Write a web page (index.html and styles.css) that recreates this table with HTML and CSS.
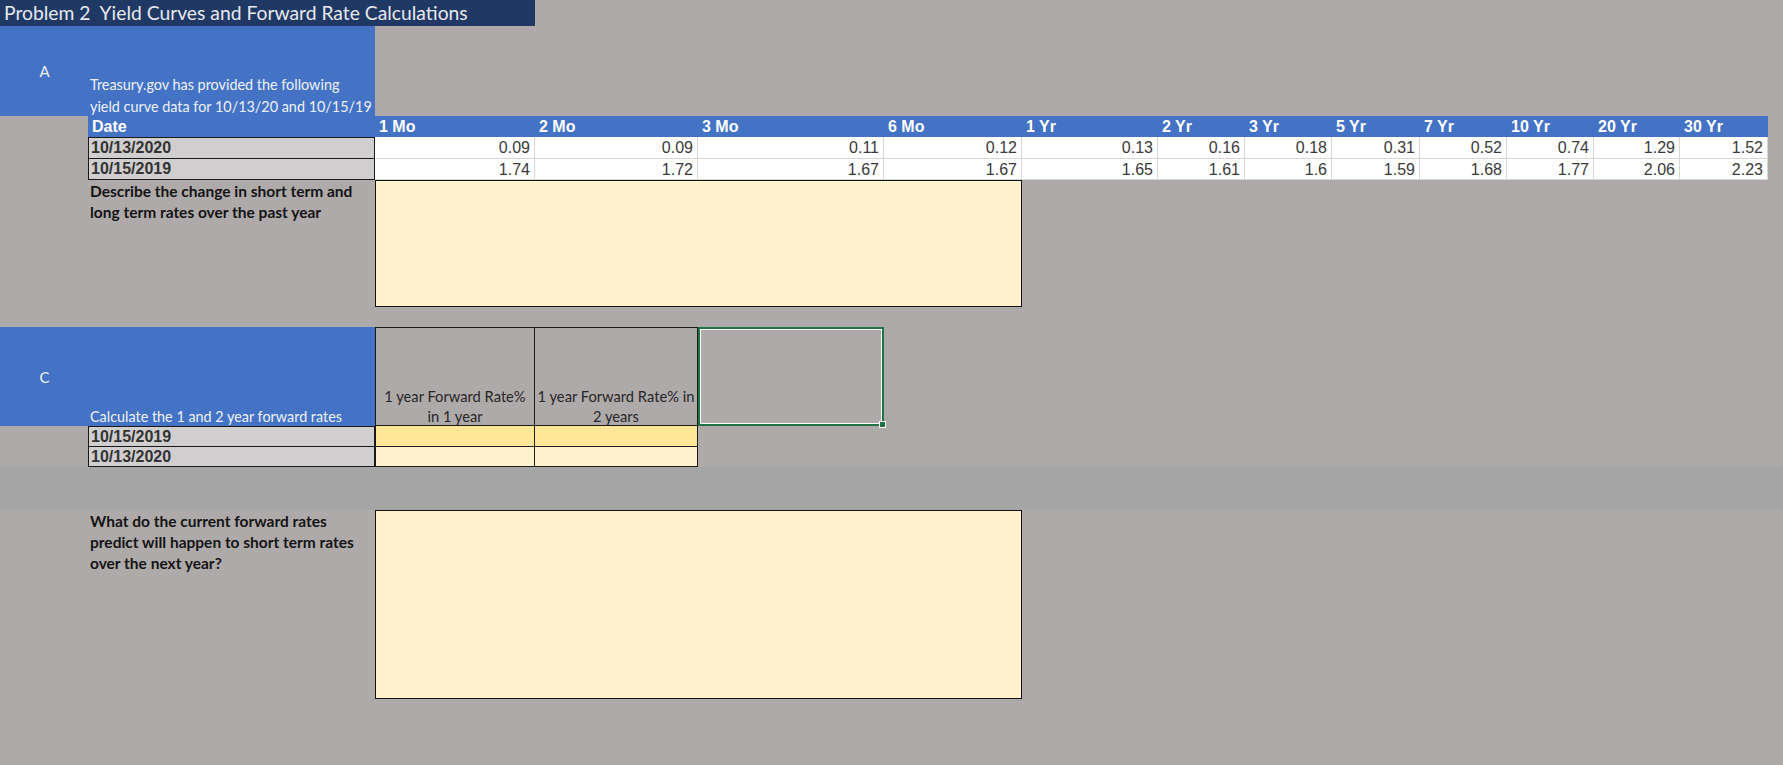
FILE: index.html
```html
<!DOCTYPE html>
<html>
<head>
<meta charset="utf-8">
<title>Problem 2 Yield Curves and Forward Rate Calculations</title>
<link rel="stylesheet" href="styles.css">
</head>
<body>
<div class="sheet">
  <!-- row 1: title -->
  <div class="title">Problem 2&nbsp; Yield Curves and Forward Rate Calculations</div>
  <div class="fill-r1"></div>

  <!-- row 2: section A -->
  <div class="blue sec-letter">A</div>
  <div class="blue sec-text"><span class="txt">Treasury.gov has provided the following<br>yield curve data for 10/13/20 and 10/15/19</span></div>
  <div class="fill-r2"></div>

  <!-- row 3: header -->
  <div class="empty"></div>
  <div class="hdr">Date</div>
  <div class="hdr">1 Mo</div>
  <div class="hdr">2 Mo</div>
  <div class="hdr">3 Mo</div>
  <div class="hdr">6 Mo</div>
  <div class="hdr">1 Yr</div>
  <div class="hdr">2 Yr</div>
  <div class="hdr">3 Yr</div>
  <div class="hdr">5 Yr</div>
  <div class="hdr">7 Yr</div>
  <div class="hdr">10 Yr</div>
  <div class="hdr">20 Yr</div>
  <div class="hdr">30 Yr</div>
  <div class="empty"></div>

  <!-- row 4 -->
  <div class="empty"></div>
  <div class="date first">10/13/2020</div>
  <div class="val">0.09</div>
  <div class="val">0.09</div>
  <div class="val">0.11</div>
  <div class="val">0.12</div>
  <div class="val">0.13</div>
  <div class="val">0.16</div>
  <div class="val">0.18</div>
  <div class="val">0.31</div>
  <div class="val">0.52</div>
  <div class="val">0.74</div>
  <div class="val">1.29</div>
  <div class="val">1.52</div>
  <div class="empty"></div>

  <!-- row 5 -->
  <div class="empty"></div>
  <div class="date">10/15/2019</div>
  <div class="val">1.74</div>
  <div class="val">1.72</div>
  <div class="val">1.67</div>
  <div class="val">1.67</div>
  <div class="val">1.65</div>
  <div class="val">1.61</div>
  <div class="val">1.6</div>
  <div class="val">1.59</div>
  <div class="val">1.68</div>
  <div class="val">1.77</div>
  <div class="val">2.06</div>
  <div class="val">2.23</div>
  <div class="empty"></div>

  <!-- row 6: describe -->
  <div class="empty"></div>
  <div class="label">Describe the change in short term and<br>long term rates over the past year</div>
  <div class="answer span4"></div>
  <div class="fill-rest"></div>

  <!-- row 7: gap -->
  <div class="gap"></div>

  <!-- row 8: section C -->
  <div class="blue sec-letter">C</div>
  <div class="blue sec-text"><span class="txt">Calculate the 1 and 2 year forward rates</span></div>
  <div class="fwd-hdr"><span class="txt">1 year Forward Rate%<br>in 1 year</span></div>
  <div class="fwd-hdr"><span class="txt">1 year Forward Rate% in<br>2 years</span></div>
  <div class="selected"></div>
  <div class="fill-rest2"></div>

  <!-- row 9 -->
  <div class="empty"></div>
  <div class="date first">10/15/2019</div>
  <div class="fwd strong"></div>
  <div class="fwd strong"></div>
  <div class="fill-rest3"></div>

  <!-- row 10 -->
  <div class="empty"></div>
  <div class="date">10/13/2020</div>
  <div class="fwd light"></div>
  <div class="fwd light"></div>
  <div class="fill-rest3"></div>

  <!-- row 11: darker band -->
  <div class="band"></div>

  <!-- row 12: question -->
  <div class="empty"></div>
  <div class="label">What do the current forward rates<br>predict will happen to short term rates<br>over the next year?</div>
  <div class="answer span4"></div>
  <div class="fill-rest"></div>
</div>
</body>
</html>
```

FILE: styles.css
```css
html, body {
  margin: 0;
  padding: 0;
  background: #aeaaaa;
}

body {
  width: 1783px;
  height: 765px;
  overflow: hidden;
  font-family: "Lato", "Open Sans", sans-serif;
}

.sheet {
  display: grid;
  grid-template-columns: 88px 287px 160px 163px 186px 138px 136px 87px 87px 88px 87px 87px 86px 88px 1fr;
  grid-template-rows: 26px 90px 21px 22px 21px 127px 20px 99px 21px 20px 43px 189px;
}

.sheet > div {
  box-sizing: border-box;
  min-width: 0;
}

/* title row */
.title {
  grid-column: 1 / 4;
  background: #203864;
  color: #e6e9ef;
  font-size: 19.3px;
  line-height: 26px;
  padding-left: 4px;
  white-space: nowrap;
  overflow: hidden;
}
.fill-r1 { grid-column: 4 / 16; }
.fill-r2 { grid-column: 3 / 16; }
.fill-rest { grid-column: 7 / 16; }
.fill-rest2 { grid-column: 6 / 16; }
.fill-rest3 { grid-column: 5 / 16; }

.blue {
  background: #4472c4;
  color: #eef2fa;
}

.sec-letter {
  display: flex;
  align-items: center;
  justify-content: center;
  font-size: 15px;
  padding-left: 1px;
}

.sec-text {
  display: flex;
  align-items: flex-end;
  font-size: 14.4px;
  line-height: 21.5px;
  padding-left: 2px;
  white-space: nowrap;
}

.txt {
  display: block;
  margin-bottom: -1px;
}

/* header row */
.hdr {
  background: #4472c4;
  color: #ffffff;
  font-family: "Liberation Sans", Arial, sans-serif;
  font-weight: bold;
  font-size: 16px;
  line-height: 21px;
  padding-left: 4px;
  white-space: nowrap;
}

.date {
  background: #d0cece;
  color: #333333;
  font-family: "Liberation Sans", Arial, sans-serif;
  font-weight: bold;
  font-size: 16px;
  line-height: 20px;
  padding-left: 2px;
  border: 1px solid #1a1a1a;
  border-top: none;
}
.date.first {
  border-top: 1px solid #1a1a1a;
}

.val {
  background: #ffffff;
  color: #3a3a3a;
  font-family: "Liberation Sans", Arial, sans-serif;
  font-size: 16px;
  line-height: 21px;
  text-align: right;
  padding-right: 4px;
  border-right: 1px solid #d6d6d6;
  border-bottom: 1px solid #d6d6d6;
}

.label {
  color: #141414;
  font-weight: bold;
  font-size: 15.5px;
  line-height: 21px;
  padding-left: 2px;
  padding-top: 1px;
  white-space: nowrap;
}

.answer {
  background: #fff2cc;
  border: 1px solid #111111;
}
.span4 { grid-column: span 4; }

.gap { grid-column: 1 / 16; }

.fwd-hdr {
  border: 1px solid #1a1a1a;
  color: #262626;
  font-size: 14.7px;
  line-height: 20px;
  text-align: center;
  display: flex;
  align-items: flex-end;
  justify-content: center;
  white-space: nowrap;
}
.fwd-hdr + .fwd-hdr { border-left: none; }

.selected {
  position: relative;
  border: 2px solid #217346;
  box-shadow: inset 0 0 0 1px #ffffff;
}
.selected::after {
  content: "";
  position: absolute;
  right: -4px;
  bottom: -4px;
  width: 5px;
  height: 5px;
  background: #217346;
  border: 1px solid #ffffff;
}

.fwd {
  border: 1px solid #1a1a1a;
  border-top: none;
}
.fwd + .fwd { border-left: none; }
.fwd.strong { background: #ffe699; }
.fwd.light { background: #fff2cc; }

.band {
  grid-column: 1 / 16;
  background: #a5a5a5;
}
```
